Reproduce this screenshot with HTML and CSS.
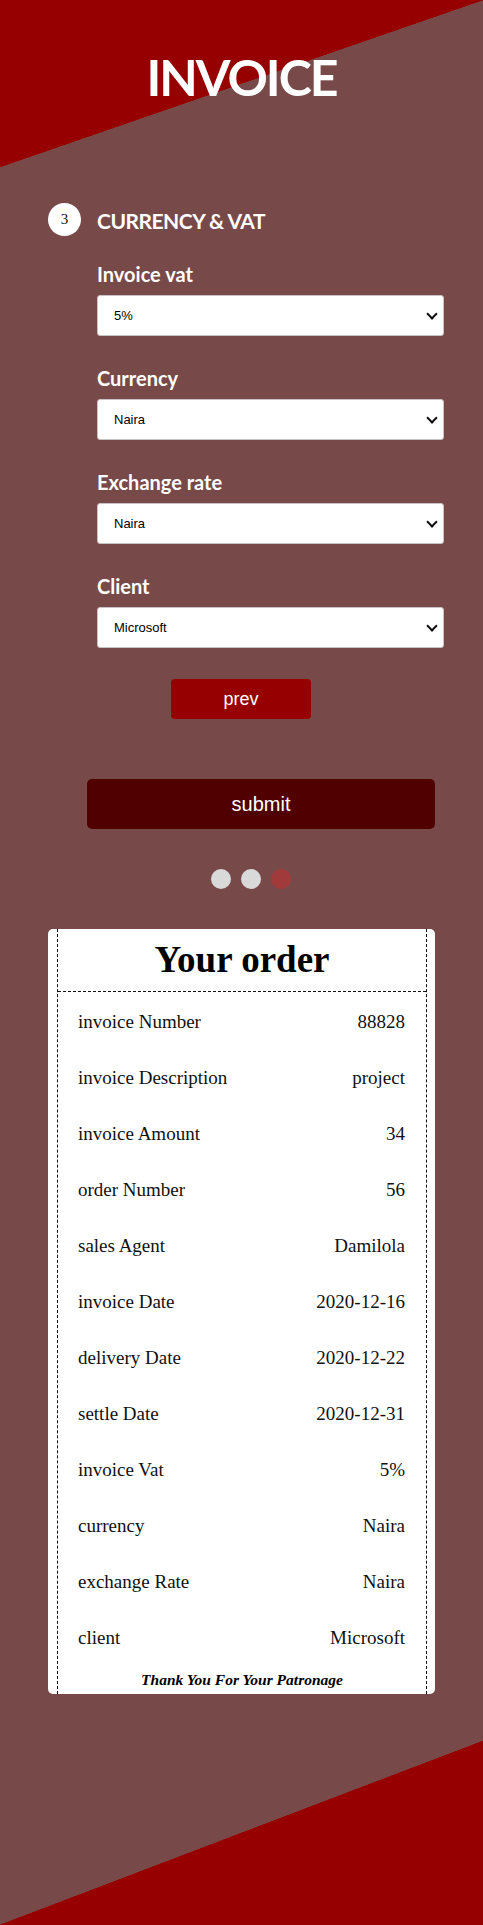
FILE: index.html
```html
<!DOCTYPE html>
<html lang="en">
<head>
<meta charset="utf-8">
<title>Invoice</title>
<link rel="stylesheet" href="styles.css">
</head>
<body>
<div class="page">
  <h1 class="title">INVOICE</h1>

  <section class="step">
    <div class="step-head">
      <span class="step-num">3</span>
      <h2 class="step-title">CURRENCY &amp; VAT</h2>
    </div>

    <div class="field">
      <label class="field-label" for="vat">Invoice vat</label>
      <div class="select-wrap">
        <select id="vat" class="select"><option>5%</option></select>
      </div>
    </div>
    <div class="field">
      <label class="field-label" for="cur">Currency</label>
      <div class="select-wrap">
        <select id="cur" class="select"><option>Naira</option></select>
      </div>
    </div>
    <div class="field">
      <label class="field-label" for="rate">Exchange rate</label>
      <div class="select-wrap">
        <select id="rate" class="select"><option>Naira</option></select>
      </div>
    </div>
    <div class="field">
      <label class="field-label" for="client">Client</label>
      <div class="select-wrap">
        <select id="client" class="select"><option>Microsoft</option></select>
      </div>
    </div>
  </section>

  <div class="prev-row"><button class="btn-prev" type="button">prev</button></div>
  <div class="submit-row"><button class="btn-submit" type="button">submit</button></div>

  <div class="dots">
    <span class="dot"></span>
    <span class="dot"></span>
    <span class="dot dot-active"></span>
  </div>

  <div class="card">
    <div class="card-inner">
      <h2 class="card-title">Your order</h2>
      <div class="rows">
        <div class="row"><span>invoice Number</span><span>88828</span></div>
        <div class="row"><span>invoice Description</span><span>project</span></div>
        <div class="row"><span>invoice Amount</span><span>34</span></div>
        <div class="row"><span>order Number</span><span>56</span></div>
        <div class="row"><span>sales Agent</span><span>Damilola</span></div>
        <div class="row"><span>invoice Date</span><span>2020-12-16</span></div>
        <div class="row"><span>delivery Date</span><span>2020-12-22</span></div>
        <div class="row"><span>settle Date</span><span>2020-12-31</span></div>
        <div class="row"><span>invoice Vat</span><span>5%</span></div>
        <div class="row"><span>currency</span><span>Naira</span></div>
        <div class="row"><span>exchange Rate</span><span>Naira</span></div>
        <div class="row"><span>client</span><span>Microsoft</span></div>
      </div>
      <p class="thanks">Thank You For Your Patronage</p>
    </div>
  </div>
</div>
</body>
</html>
```

FILE: styles.css
```css
* { box-sizing: border-box; }

html, body {
  margin: 0;
  padding: 0;
}

body {
  background: #784949;
}

.page {
  width: 483px;
  height: 1925px;
  overflow: hidden;
  background:
    linear-gradient(to bottom right, #960000 50%, transparent 50.2%) top left / 483px 167px no-repeat,
    linear-gradient(to top left, #960000 50%, transparent 50.2%) bottom left / 483px 184px no-repeat,
    #784949;
  padding-top: 47px;
  font-family: "Lato", "Open Sans", sans-serif;
}

.title {
  margin: 0;
  text-align: center;
  color: #fff;
  font-family: "Lato", sans-serif;
  font-weight: 700;
  font-size: 50px;
  line-height: 60px;
  letter-spacing: -2px;
}

.step {
  padding-left: 48px;
  margin-top: 96px;
}

.step-head {
  display: flex;
  align-items: center;
  gap: 16px;
  height: 33px;
}

.step-num {
  width: 33px;
  height: 33px;
  border-radius: 50%;
  background: #fff;
  color: #111;
  font-family: "Liberation Serif", serif;
  font-size: 15px;
  display: flex;
  align-items: center;
  justify-content: center;
}

.step-title {
  margin: 0;
  color: #fff;
  font-size: 21px;
  font-weight: 700;
  line-height: 24px;
  letter-spacing: -0.5px;
  padding-top: 2px;
}

.field {
  margin-left: 49px;
  width: 347px;
  margin-top: 26px;
}

.field + .field {
  margin-top: 30px;
}

.field-label {
  display: block;
  color: #fff;
  font-size: 20px;
  font-weight: 700;
  line-height: 24px;
  margin-bottom: 9px;
}

.select-wrap {
  position: relative;
}

.select-wrap::after {
  content: "";
  position: absolute;
  right: 8px;
  top: 15px;
  width: 6px;
  height: 6px;
  border-right: 2px solid #111;
  border-bottom: 2px solid #111;
  transform: rotate(45deg);
  pointer-events: none;
}

.select {
  display: block;
  width: 100%;
  height: 41px;
  -webkit-appearance: none;
  appearance: none;
  background: #fff;
  border: 1px solid #c9c2c2;
  border-radius: 3px;
  padding: 0 0 0 16px;
  font-family: "Liberation Sans", Arial, sans-serif;
  font-size: 13px;
  color: #000;
}

.prev-row {
  margin-top: 31px;
  padding-left: 171px;
}

.btn-prev {
  display: block;
  width: 140px;
  height: 40px;
  border: 0;
  border-radius: 4px;
  background: #960000;
  color: #fff;
  font-family: "Liberation Sans", Arial, sans-serif;
  font-size: 18px;
}

.submit-row {
  margin-top: 60px;
  padding-left: 87px;
}

.btn-submit {
  display: block;
  width: 348px;
  height: 50px;
  border: 0;
  border-radius: 5px;
  background: #500000;
  color: #fff;
  font-family: "Liberation Sans", Arial, sans-serif;
  font-size: 20px;
}

.dots {
  margin-top: 40px;
  padding-left: 211px;
  display: flex;
  gap: 10px;
}

.dot {
  width: 20px;
  height: 20px;
  border-radius: 50%;
  background: #d9d9d9;
}

.dot-active {
  background: #a13a3a;
}

.card {
  margin: 40px 0 0 48px;
  width: 387px;
  background: #fff;
  border-radius: 5px;
  padding: 0 8px 0 9px;
  font-family: "Liberation Serif", "Times New Roman", serif;
  color: #111;
}

.card-inner {
  border-left: 1px dashed #111;
  border-right: 1px dashed #111;
}

.card-title {
  margin: 0;
  padding: 10px 0;
  text-align: center;
  font-size: 37px;
  line-height: 42px;
  font-weight: 700;
  color: #000;
  border-bottom: 1px dashed #111;
}

.rows {
  padding: 2px 21px 0 20px;
}

.row {
  display: flex;
  justify-content: space-between;
  font-size: 19px;
  line-height: 56px;
  height: 56px;
}

.thanks {
  margin: 0;
  padding: 4px 0 4px;
  text-align: center;
  font-size: 15.5px;
  line-height: 20px;
  font-weight: 700;
  font-style: italic;
  color: #000;
}
```
